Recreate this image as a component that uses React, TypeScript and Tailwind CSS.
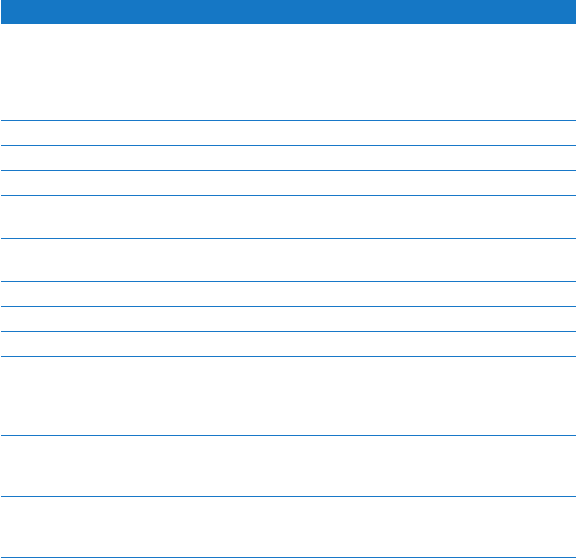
const rows = ['h-[97px]', 'h-[25px]', 'h-[25px]', 'h-[25px]', 'h-[43px]', 'h-[43px]', 'h-[25px]', 'h-[25px]', 'h-[25px]', 'h-[79px]', 'h-[61px]', 'h-[61px]']

export default function App() {
  return (
    <div className="w-[576px] h-[558px] bg-white overflow-hidden font-['Liberation_Sans',sans-serif]">
      <div className="ml-px flex flex-col">
        {/* header bar */}
        <div className="h-6 bg-[#1577c5]" />
        {rows.map((h, i) => (
          <div key={i} className={`${h} border-b border-[#1878c8]`} />
        ))}
      </div>
    </div>
  )
}
